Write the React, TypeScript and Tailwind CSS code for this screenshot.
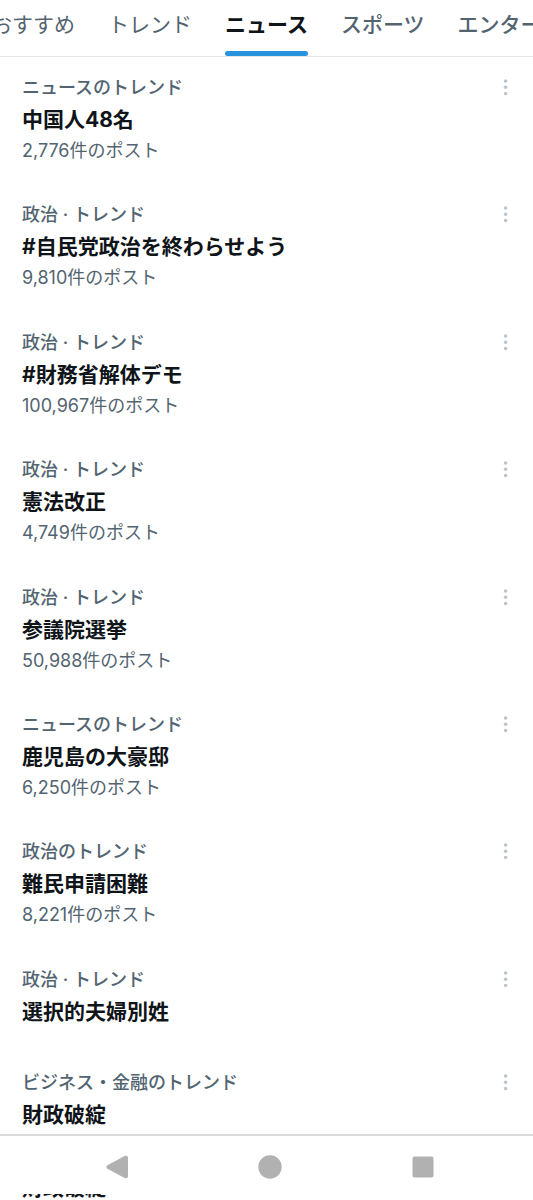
type Trend = {
  category: string;
  title: string;
  posts?: string;
};

const tabs = [
  { name: 'おすすめ', weight: 'font-normal' },
  { name: 'トレンド', weight: 'font-normal' },
  { name: 'ニュース', weight: 'font-bold' },
  { name: 'スポーツ', weight: 'font-medium' },
  { name: 'エンター', weight: 'font-medium' },
];

const activeTab = 'ニュース';

const trends: Trend[] = [
  { category: 'ニュースのトレンド', title: '中国人48名', posts: '2,776件のポスト' },
  { category: '政治 · トレンド', title: '#自民党政治を終わらせよう', posts: '9,810件のポスト' },
  { category: '政治 · トレンド', title: '#財務省解体デモ', posts: '100,967件のポスト' },
  { category: '政治 · トレンド', title: '憲法改正', posts: '4,749件のポスト' },
  { category: '政治 · トレンド', title: '参議院選挙', posts: '50,988件のポスト' },
  { category: 'ニュースのトレンド', title: '鹿児島の大豪邸', posts: '6,250件のポスト' },
  { category: '政治のトレンド', title: '難民申請困難', posts: '8,221件のポスト' },
  { category: '政治 · トレンド', title: '選択的夫婦別姓' },
  { category: 'ビジネス・金融のトレンド', title: '財政破綻' },
];

function TabBar() {
  return (
    <div className="overflow-hidden border-b border-[#e3e8eb]">
      <div role="tablist" className="-ml-[25px] flex gap-px">
        {tabs.map((tab) => {
          const isActive = tab.name === activeTab;

          return (
            <button
              key={tab.name}
              type="button"
              role="tab"
              aria-selected={isActive}
              className={`flex h-14 shrink-0 flex-col justify-between px-4 pt-[9px] text-[21px] leading-8 ${tab.weight} ${
                isActive ? 'text-[#0f1419]' : 'text-[#536471]'
              }`}
            >
              <span>{tab.name}</span>
              {isActive && <span className="h-[5px] w-full rounded-full bg-[#2a93df]" />}
            </button>
          );
        })}
      </div>
    </div>
  );
}

function TrendItem({ trend }: { trend: Trend }) {
  return (
    <li className="flex items-start justify-between">
      <div className="pt-px">
        <p className="text-[18px] leading-6 font-medium text-[#536471]">{trend.category}</p>
        <h2 className="mt-1.5 mb-[5px] text-[21px] leading-7 font-bold text-[#0f1419]">{trend.title}</h2>
        {trend.posts && <p className="text-[18px] leading-6 text-[#536471]">{trend.posts}</p>}
      </div>
      <button type="button" aria-label="もっと見る" className="h-6 w-6 text-[#b9c6cf]">
        <svg viewBox="0 0 24 24" className="h-6 w-6" fill="currentColor">
          <circle cx="11.6" cy="6" r="1.8" />
          <circle cx="11.6" cy="12.2" r="1.8" />
          <circle cx="11.6" cy="18.5" r="1.8" />
        </svg>
      </button>
    </li>
  );
}

function SystemNav() {
  return (
    <nav className="flex h-[60px] items-center justify-center gap-[129px] border-t-2 border-[#dcdcdc] pt-[3px] pl-[7px] text-[#b1b1b1]">
      <button type="button" aria-label="戻る">
        <svg viewBox="0 0 24 24" className="h-6 w-6" fill="currentColor">
          <path d="M2 10.6 20 .8Q23 0 23 3V21Q23 24 20 23.2L2 13.4Q.6 12 2 10.6Z" />
        </svg>
      </button>
      <button type="button" aria-label="ホーム">
        <svg viewBox="0 0 24 24" className="h-6 w-6" fill="currentColor">
          <circle cx="12" cy="12" r="11.7" />
        </svg>
      </button>
      <button type="button" aria-label="最近のアプリ">
        <svg viewBox="0 0 24 24" className="h-6 w-6" fill="currentColor">
          <rect x="1.5" y="1.5" width="21" height="21" rx="2" />
        </svg>
      </button>
    </nav>
  );
}

export default function App() {
  return (
    <div className="flex min-h-screen flex-col bg-white font-['Inter','Noto_Sans_CJK_JP',sans-serif]">
      <TabBar />
      <ul className="flex flex-1 flex-col justify-between pt-[18px] pr-[15px] pl-[22px]">
        {trends.map((trend) => (
          <TrendItem key={trend.title} trend={trend} />
        ))}
      </ul>
      <SystemNav />
      {/* Sliver of the list still showing under the system bar */}
      <div aria-hidden="true" className="flex h-1.5 items-end overflow-hidden pl-[22px]">
        <p className="text-[21px] leading-6 font-bold text-[#0f1419]">財政破綻</p>
      </div>
    </div>
  );
}
